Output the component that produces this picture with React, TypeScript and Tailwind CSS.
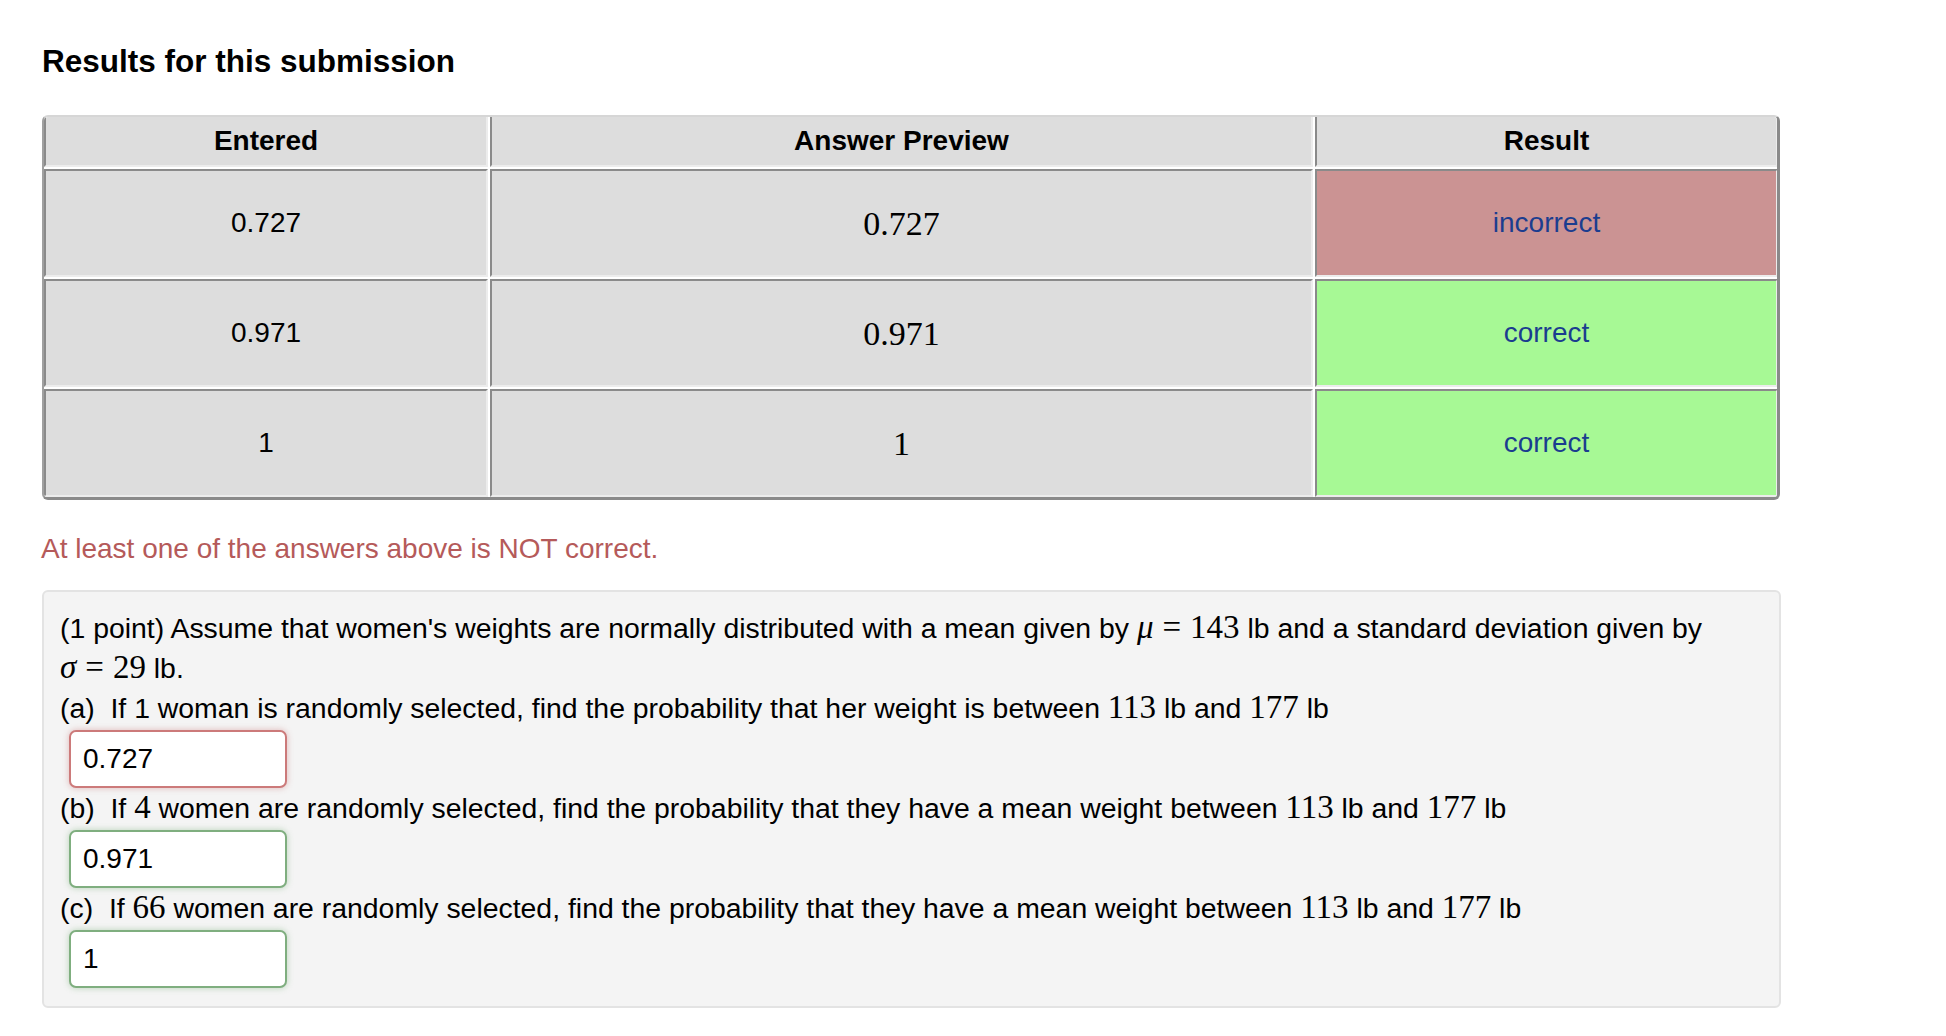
import React from 'react';

type Row = { entered: string; preview: string; ok: boolean };

const rows: Row[] = [
  { entered: '0.727', preview: '0.727', ok: false },
  { entered: '0.971', preview: '0.971', ok: true },
  { entered: '1', preview: '1', ok: true },
];

const cellBase =
  'flex items-center justify-center border-l-2 border-r-2 border-b-2 border-l-[#8a8a8a] border-r-[#ececec] border-b-[#ececec]';

function M({ children }: { children: React.ReactNode }) {
  return <span className="font-['Liberation_Serif',serif] text-[33px] leading-none">{children}</span>;
}

// "x = n" the way MathJax spaces it
function Eq({ sym, val }: { sym: string; val: string }) {
  return (
    <span className="font-['Liberation_Serif',serif] text-[33px] leading-none">
      <span className="italic">{sym}</span>
      <span className="mx-[9px]">=</span>
      {val}
    </span>
  );
}

function AnswerBox({ value, ok }: { value: string; ok: boolean }) {
  return (
    <div
      className={`ml-[9px] mt-[2px] flex h-[58px] w-[218px] items-center rounded-[7px] border-2 bg-white pl-[12px] text-[28px] ${
        ok
          ? 'border-[#7fae7f] shadow-[0_0_6px_rgba(110,170,110,0.45)]'
          : 'border-[#cc7a7a] shadow-[0_0_6px_rgba(200,110,110,0.45)]'
      }`}
    >
      {value}
    </div>
  );
}

export default function App() {
  return (
    <div className="min-h-screen bg-white font-['Liberation_Sans',Arial,sans-serif] text-black">
      <h1 className="ml-[42px] pt-[43px] text-[31.5px] font-bold leading-[36px]">
        Results for this submission
      </h1>

      <div className="ml-[42px] mt-[36px] w-[1738px] overflow-hidden rounded-[6px] border-2 border-t-[#d6d6d6] border-l-[#a0a0a0] border-r-[3px] border-r-[#8a8a8a] border-b-[3px] border-b-[#8a8a8a]">
        <div className="grid grid-cols-[444px_823px_463px] gap-[2px] bg-white text-[28px]">
          {['Entered', 'Answer Preview', 'Result'].map((h) => (
            <div key={h} className={`${cellBase} h-[50px] bg-[#dddddd] font-bold`}>
              {h}
            </div>
          ))}
          {rows.map((r, i) => (
            <React.Fragment key={i}>
              <div className={`${cellBase} h-[108px] border-t-2 border-t-[#8a8a8a] bg-[#dddddd]`}>
                {r.entered}
              </div>
              <div className={`${cellBase} h-[108px] border-t-2 border-t-[#8a8a8a] bg-[#dddddd]`}>
                <span className="font-['Liberation_Serif',serif] text-[34px]">{r.preview}</span>
              </div>
              <div
                className={`${cellBase} h-[108px] border-t-2 border-t-[#8a8a8a] text-[#1b3d8f] ${
                  r.ok ? 'bg-[#a7f995]' : 'bg-[#cb9393]'
                }`}
              >
                {r.ok ? 'correct' : 'incorrect'}
              </div>
            </React.Fragment>
          ))}
        </div>
      </div>

      <p className="ml-[41px] mt-[29px] text-[28px] leading-[40px] text-[#b55a5a]">
        At least one of the answers above is NOT correct.
      </p>

      <div className="ml-[42px] mt-[21px] w-[1739px] rounded-[6px] border-2 border-[#e3e3e3] bg-[#f4f4f4] pb-[18px] pl-[16px] pt-[16px] text-[28.4px] leading-[40px]">
        <div>
          (1 point) Assume that women's weights are normally distributed with a mean given by{' '}
          <Eq sym="μ" val="143" /> lb and a standard deviation given by
          <br />
          <Eq sym="σ" val="29" /> lb.
        </div>

        <div className="h-[40px]">
          (a)&nbsp; If 1 woman is randomly selected, find the probability that her weight is between{' '}
          <M>113</M> lb and <M>177</M> lb
        </div>
        <AnswerBox value="0.727" ok={false} />

        <div className="h-[40px]">
          (b)&nbsp; If <M>4</M> women are randomly selected, find the probability that they have a mean
          weight between <M>113</M> lb and <M>177</M> lb
        </div>
        <AnswerBox value="0.971" ok />

        <div className="h-[40px]">
          (c)&nbsp; If <M>66</M> women are randomly selected, find the probability that they have a mean
          weight between <M>113</M> lb and <M>177</M> lb
        </div>
        <AnswerBox value="1" ok />
      </div>
    </div>
  );
}
